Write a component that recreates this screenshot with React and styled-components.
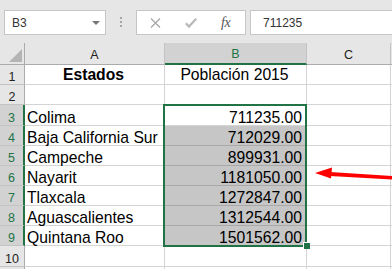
import React from "react";
import styled, { createGlobalStyle } from "styled-components";

const GREEN = "#217346";

const rows = [
	["Colima", "711235.00"],
	["Baja California Sur", "712029.00"],
	["Campeche", "899931.00"],
	["Nayarit", "1181050.00"],
	["Tlaxcala", "1272847.00"],
	["Aguascalientes", "1312544.00"],
	["Quintana Roo", "1501562.00"],
];

function App() {
	return (
		<Page>
			<GlobalStyle />
			<Toolbar>
				<NameBox>
					<span>B3</span>
					<DropArrow />
				</NameBox>
				<Dots>
					<i />
					<i />
					<i />
				</Dots>
				<FuncBox>
					<ToolIcon width="11" height="10" viewBox="0 0 11 10" $left={13}>
						<path d="M1 0.5 L10 9.5 M10 0.5 L1 9.5" stroke="#a8a8a8" strokeWidth="1.3" fill="none" />
					</ToolIcon>
					<ToolIcon width="12" height="10" viewBox="0 0 12 10" $left={24}>
						<path d="M0.8 5.2 L4 8.6 L11.2 0.8" stroke="#b8b8b8" strokeWidth="2.2" fill="none" />
					</ToolIcon>
					<Fx>fx</Fx>
				</FuncBox>
				<FormulaInput>711235</FormulaInput>
			</Toolbar>

			<Sheet>
				<Corner>
					<CornerTriangle />
				</Corner>
				<ColHead>A</ColHead>
				<ColHead $active>B</ColHead>
				<ColHead>C</ColHead>
				<ColHead />

				<RowHead>1</RowHead>
				<Cell $align="center" $bold $lift>Estados</Cell>
				<Cell $align="center" $lift>Población 2015</Cell>
				<Cell />
				<Cell />

				<RowHead>2</RowHead>
				<Cell />
				<Cell />
				<Cell />
				<Cell />

				{rows.map(([name, value], i) => (
					<React.Fragment key={name}>
						<RowHead $active>{i + 3}</RowHead>
						<Cell>{name}</Cell>
						<Cell $align="right" $fill={i > 0}>
							{value}
						</Cell>
						<Cell />
						<Cell />
					</React.Fragment>
				))}

				<RowHead>10</RowHead>
				<Cell />
				<Cell />
				<Cell />
				<Cell />

				<RowHead />
				<Cell />
				<Cell />
				<Cell />
				<Cell />

				<Selection>
					<FillHandle />
				</Selection>
			</Sheet>

			<Arrow width="82" height="18" viewBox="0 0 82 18">
				<polygon points="20,7 82,11 82,14.5 20,11" fill="#f00" />
				<polygon points="5,8 22,2.5 21,13.5" fill="#f00" />
			</Arrow>
		</Page>
	);
}

export default App;

const GlobalStyle = createGlobalStyle`
	html, body {
		margin: 0;
		padding: 0;
		background: #fff;
		overflow: hidden;
	}
	body {
		font-family: "Liberation Sans", Arial, sans-serif;
	}
`;

const Page = styled.div`
	position: relative;
	width: 392px;
	height: 269px;
	overflow: hidden;
`;

const Toolbar = styled.div`
	display: flex;
	align-items: flex-start;
	height: 43px;
	box-sizing: border-box;
	padding: 10px 0 0 4px;
	background: #e6e6e6;
`;

const NameBox = styled.div`
	display: flex;
	align-items: center;
	justify-content: space-between;
	width: 102px;
	height: 25px;
	box-sizing: border-box;
	padding: 0 5px 0 7px;
	background: #fff;
	border: 1px solid #c6c6c6;
	font-size: 12px;
	color: #333;
`;

const DropArrow = styled.span`
	width: 0;
	height: 0;
	border-left: 4px solid transparent;
	border-right: 4px solid transparent;
	border-top: 4px solid #777;
	margin-top: 1px;
`;

const Dots = styled.div`
	display: flex;
	flex-direction: column;
	gap: 2px;
	margin: 7px 14px 0 14px;

	i {
		display: block;
		width: 2px;
		height: 2px;
		background: #a6a6a6;
	}
`;

const FuncBox = styled.div`
	display: flex;
	align-items: center;
	width: 110px;
	height: 25px;
	box-sizing: border-box;
	background: #fff;
	border: 1px solid #c6c6c6;
`;

const ToolIcon = styled.svg`
	flex: none;
	margin-left: ${(p) => p.$left}px;
`;

const Fx = styled.span`
	margin-left: 24px;
	font-family: "Liberation Serif", "Times New Roman", serif;
	font-style: italic;
	font-size: 14px;
	color: #555;
	letter-spacing: -0.5px;
`;

const FormulaInput = styled.div`
	flex: 1;
	display: flex;
	align-items: center;
	height: 25px;
	box-sizing: border-box;
	margin: 0 -10px 0 4px;
	padding-left: 12px;
	background: #fff;
	border: 1px solid #c6c6c6;
	font-size: 12px;
	color: #333;
`;

const Sheet = styled.div`
	position: relative;
	display: grid;
	grid-template-columns: 25px 140px 142px 84px 1fr;
	grid-template-rows: 22px 20px 20px 21px 20px 20px 20px 20px 20px 20px 21px 20px;
`;

const Corner = styled.div`
	position: relative;
	background: #e6e6e6;
	border-right: 1px solid #ababab;
	border-bottom: 1px solid #ababab;
`;

const CornerTriangle = styled.span`
	position: absolute;
	right: 2px;
	bottom: 2px;
	width: 0;
	height: 0;
	border-left: 13px solid transparent;
	border-bottom: 13px solid #b4b4b4;
`;

const ColHead = styled.div`
	display: flex;
	align-items: center;
	justify-content: center;
	box-sizing: border-box;
	padding-top: 2px;
	background: ${(p) => (p.$active ? "#d2d2d2" : "#e6e6e6")};
	border-right: 1px solid #c3c3c3;
	border-bottom: ${(p) => (p.$active ? `2px solid ${GREEN}` : "1px solid #ababab")};
	font-size: 12.5px;
	color: ${(p) => (p.$active ? GREEN : "#222")};
`;

const RowHead = styled.div`
	display: flex;
	align-items: flex-end;
	justify-content: center;
	box-sizing: border-box;
	background: ${(p) => (p.$active ? "#d2d2d2" : "#e6e6e6")};
	border-right: ${(p) => (p.$active ? `2px solid ${GREEN}` : "1px solid #ababab")};
	border-bottom: 1px solid #c3c3c3;
	font-size: 12.5px;
	line-height: 12px;
	padding-bottom: 1px;
	color: ${(p) => (p.$active ? GREEN : "#222")};
`;

const Cell = styled.div`
	display: flex;
	align-items: flex-end;
	justify-content: ${(p) =>
		p.$align === "right" ? "flex-end" : p.$align === "center" ? "center" : "flex-start"};
	box-sizing: border-box;
	padding: 0 4px ${(p) => (p.$lift ? "2px" : "0")} 2px;
	background: ${(p) => (p.$fill ? "#c6c6c6" : "#fff")};
	border-right: 1px solid ${(p) => (p.$fill ? "#a9a9a9" : "#d4d4d4")};
	border-bottom: 1px solid ${(p) => (p.$fill ? "#a9a9a9" : "#d4d4d4")};
	font-size: 15.7px;
	line-height: 14px;
	font-weight: ${(p) => (p.$bold ? 700 : 400)};
	color: #000;
	white-space: nowrap;
	overflow: visible;
`;

const Selection = styled.div`
	position: absolute;
	left: 163px;
	top: 61px;
	width: 144px;
	height: 143px;
	box-sizing: border-box;
	border: 2px solid ${GREEN};
	pointer-events: none;
`;

const FillHandle = styled.span`
	position: absolute;
	right: -5px;
	bottom: -4px;
	width: 6px;
	height: 6px;
	background: ${GREEN};
	border-left: 1px solid #fff;
	border-top: 1px solid #fff;
`;

const Arrow = styled.svg`
	position: absolute;
	left: 310px;
	top: 165px;
`;
